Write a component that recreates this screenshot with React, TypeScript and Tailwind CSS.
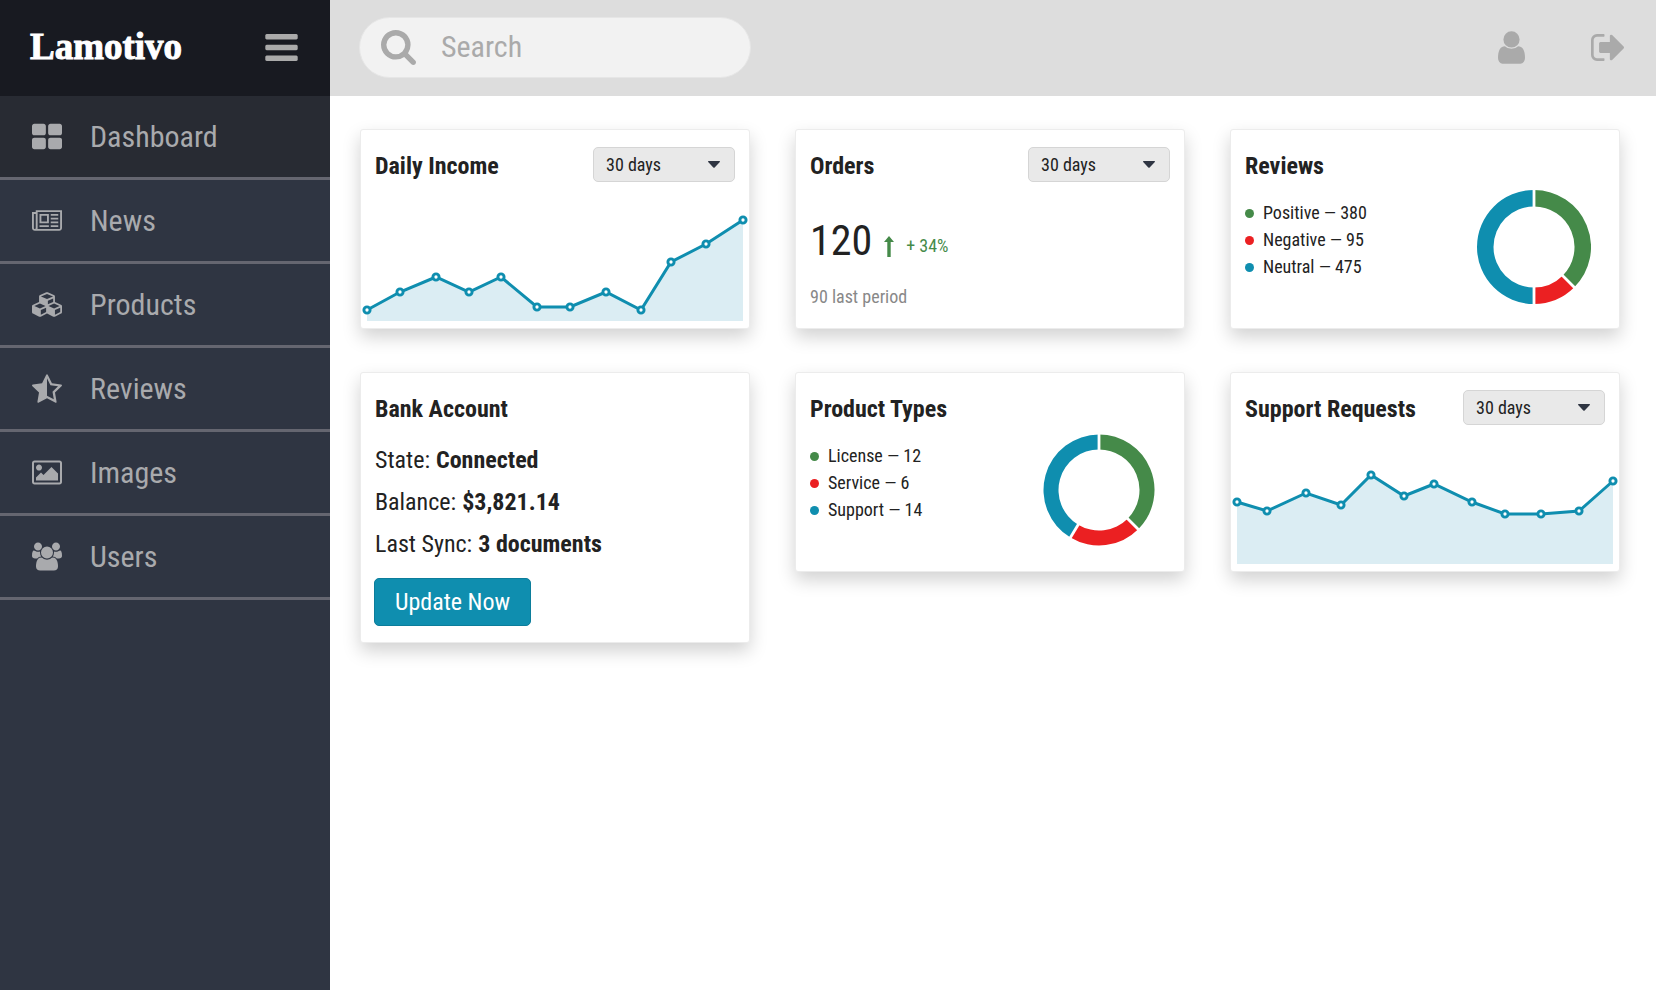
import { ReactNode, useState } from 'react'

interface IconProps {
  viewBox: string
  className: string
  d: string
}

const BARS = 'M1664 1344v128q0 26-19 45t-45 19h-1408q-26 0-45-19t-19-45v-128q0-26 19-45t45-19h1408q26 0 45 19t19 45zm0-512v128q0 26-19 45t-45 19h-1408q-26 0-45-19t-19-45v-128q0-26 19-45t45-19h1408q26 0 45 19t19 45zm0-512v128q0 26-19 45t-45 19h-1408q-26 0-45-19t-19-45v-128q0-26 19-45t45-19h1408q26 0 45 19t19 45z'
const SEARCH = 'M1216 832q0-185-131.5-316.5t-316.5-131.5-316.5 131.5-131.5 316.5 131.5 316.5 316.5 131.5 316.5-131.5 131.5-316.5zm512 832q0 52-38 90t-90 38q-54 0-90-38l-343-342q-179 124-399 124-143 0-273.5-55.5t-225-150-150-225-55.5-273.5 55.5-273.5 150-225 225-150 273.5-55.5 273.5 55.5 225 150 150 225 55.5 273.5q0 220-124 399l343 343q37 37 37 90z'
const USER = 'M1536 1399q0 109-62.5 187t-150.5 78h-854q-88 0-150.5-78t-62.5-187q0-85 8.5-160.5t31.5-152 58.5-131 94-89 134.5-34.5q131 128 313 128t313-128q76 0 134.5 34.5t94 89 58.5 131 31.5 152 8.5 160.5zm-256-887q0 159-112.5 271.5t-271.5 112.5-271.5-112.5-112.5-271.5 112.5-271.5 271.5-112.5 271.5 112.5 112.5 271.5z'
const SIGN_OUT = 'M704 1440q0 4 1 20t.5 26.5-3 23.5-10 19.5-20.5 6.5h-320q-119 0-203.5-84.5t-84.5-203.5v-704q0-119 84.5-203.5t203.5-84.5h320q13 0 22.5 9.5t9.5 22.5q0 4 1 20t.5 26.5-3 23.5-10 19.5-20.5 6.5h-320q-66 0-113 47t-47 113v704q0 66 47 113t113 47h312l11.5 1 11.5 3 8 5.5 7 9 2 13.5zm928-544q0 26-19 45l-544 544q-19 19-45 19t-45-19-19-45v-288h-448q-26 0-45-19t-19-45v-384q0-26 19-45t45-19h448v-288q0-26 19-45t45-19 45 19l544 544q19 19 19 45z'
const TILES = 'M832 1024v384q0 52-38 90t-90 38h-512q-52 0-90-38t-38-90v-384q0-52 38-90t90-38h512q52 0 90 38t38 90zm0-768v384q0 52-38 90t-90 38h-512q-52 0-90-38t-38-90v-384q0-52 38-90t90-38h512q52 0 90 38t38 90zm896 768v384q0 52-38 90t-90 38h-512q-52 0-90-38t-38-90v-384q0-52 38-90t90-38h512q52 0 90 38t38 90zm0-768v384q0 52-38 90t-90 38h-512q-52 0-90-38t-38-90v-384q0-52 38-90t90-38h512q52 0 90 38t38 90z'
const NEWS = 'M1024 512h-384v384h384v-384zm128 640v128h-640v-128h640zm0-768v640h-640v-640h640zm640 768v128h-512v-128h512zm0-256v128h-512v-128h512zm0-256v128h-512v-128h512zm0-256v128h-512v-128h512zm-1536 960v-960h-128v960q0 26 19 45t45 19 45-19 19-45zm1664 0v-1088h-1536v1088q0 33-11 64h1483q26 0 45-19t19-45zm128-1216v1216q0 80-56 136t-136 56h-1664q-80 0-136-56t-56-136v-1088h256v-128h1792z'
const CUBES = 'M640 1632l384-192v-314l-384 164v342zm-64-454l404-173-404-173-404 173zm1088 454l384-192v-314l-384 164v342zm-64-454l404-173-404-173-404 173zm-448-293l384-165v-266l-384 164v267zm-64-379l441-189-441-189-441 189zm1088 518v416q0 36-19 67t-52 47l-448 224q-25 14-57 14t-57-14l-448-224q-4-2-7-4-2 2-7 4l-448 224q-25 14-57 14t-57-14l-448-224q-33-16-52-47t-19-67v-416q0-38 21.5-70t56.5-48l434-186v-400q0-38 21.5-70t56.5-48l448-192q23-10 50-10t50 10l448 192q35 16 56.5 48t21.5 70v400l434 186q36 16 57 48t21 70z'
const HALF_STAR = 'M1728 647q0 22-26 48l-363 354 86 500q1 7 1 20 0 50-41 50-19 0-40-12l-449-236-449 236q-22 12-40 12-21 0-31.5-14.5t-10.5-35.5q0-6 2-20l86-500-364-354q-25-27-25-48 0-37 56-46l502-73 225-455q19-41 49-41t49 41l225 455 502 73q56 9 56 46zM896 263v963l377 199-72-421 306-297-422-62z'
const PICTURE = 'M640 576q0 80-56 136t-136 56-136-56-56-136 56-136 136-56 136 56 56 136zm1024 384v448h-1408v-192l320-320 160 160 512-512zm96-704h-1600q-13 0-22.5 9.5t-9.5 22.5v1216q0 13 9.5 22.5t22.5 9.5h1600q13 0 22.5-9.5t9.5-22.5v-1216q0-13-9.5-22.5t-22.5-9.5zm160 32v1216q0 66-47 113t-113 47h-1600q-66 0-113-47t-47-113v-1216q0-66 47-113t113-47h1600q66 0 113 47t47 113z'
const USERS = 'M593 896q-162 5-265 128h-134q-82 0-138-40.5t-56-118.5q0-353 124-353 6 0 43.5 21t97.5 42.5 119 21.5q67 0 133-23-5 37-5 66 0 139 81 256zm1071 637q0 120-73 189.5t-194 69.5h-874q-121 0-194-69.5t-73-189.5q0-53 3.5-103.5t14-109 26.5-108.5 43-97.5 62-81 85.5-53.5 111.5-20q10 0 43 21.5t73 48 107 48 135 21.5 135-21.5 107-48 73-48 43-21.5q61 0 111.5 20t85.5 53.5 62 81 43 97.5 26.5 108.5 14 109 3.5 103.5zm-1024-1277q0 106-75 181t-181 75-181-75-75-181 75-181 181-75 181 75 75 181zm704 384q0 159-112.5 271.5t-271.5 112.5-271.5-112.5-112.5-271.5 112.5-271.5 271.5-112.5 271.5 112.5 112.5 271.5zm576 225q0 78-56 118.5t-138 40.5h-134q-103-123-265-128 81-117 81-256 0-29-5-66 66 23 133 23 59 0 119-21.5t97.5-42.5 43.5-21q124 0 124 353zm-128-609q0 106-75 181t-181 75-181-75-75-181 75-181 181-75 181 75 75 181z'

const NAV = [
  { label: 'Dashboard', viewBox: '64 128 1664 1408', d: TILES },
  { label: 'News', viewBox: '0 128 2048 1408', d: NEWS },
  { label: 'Products', viewBox: '0 0 2176 1792', d: CUBES },
  { label: 'Reviews', viewBox: '64 32 1664 1587', d: HALF_STAR },
  { label: 'Images', viewBox: '0 128 1920 1536', d: PICTURE },
  { label: 'Users', viewBox: '0 0 1920 1792', d: USERS },
]

const INCOME = [[6, 110], [39, 92], [75, 77], [108, 92], [140, 77], [176, 107], [209, 107], [245, 92], [280, 110], [310, 62], [345, 44], [382, 20]]
const REQUESTS = [[6, 59], [36, 68], [75, 50], [110, 62], [140, 32], [173, 53], [203, 41], [241, 59], [274, 71], [310, 71], [348, 68], [382, 38]]

const GREEN = '#458a49'
const RED = '#eb2022'
const BLUE = '#0f8eaf'

function Icon({ viewBox, className, d }: IconProps) {
  return (
    <svg viewBox={viewBox} className={className} fill="currentColor" fillRule="evenodd" aria-hidden="true">
      <path d={d} />
    </svg>
  )
}

function PeriodSelect({ label }: { label: string }) {
  const [period, setPeriod] = useState('30')

  return (
    <div className="relative">
      <select
        aria-label={label}
        value={period}
        onChange={(e) => setPeriod(e.target.value)}
        className="block h-[35px] w-[142px] appearance-none rounded-[5px] border border-[#d5d5d5] bg-[#e9e9e9] pl-3 pr-8 text-[18px] leading-6"
      >
        <option value="7">7 days</option>
        <option value="30">30 days</option>
        <option value="90">90 days</option>
      </select>
      <svg viewBox="0 0 12 7" className="pointer-events-none absolute top-[14px] right-[15px] h-[7px] w-3" fill="#2f3542" aria-hidden="true">
        <path d="M.6 0h10.8q.9.2.4 1L6.7 6.5q-.7.6-1.4 0L.2 1Q-.3.2.6 0z" />
      </svg>
    </div>
  )
}

interface CardProps {
  title: string
  select?: boolean
  children: ReactNode
}

function Card({ title, select, children }: CardProps) {
  return (
    <section className="rounded-[3px] border border-[#ececec] bg-white shadow-[0_8px_18px_rgba(0,0,0,0.18)]">
      <div className="flex h-[70px] items-start justify-between px-[14px] pt-[17px]">
        <h2 className="text-[24px] leading-[38px] font-bold">{title}</h2>
        {select && <PeriodSelect label={`${title} period`} />}
      </div>
      {children}
    </section>
  )
}

function LineChart({ points }: { points: number[][] }) {
  const line = points.map((p) => p.join(',')).join(' ')

  return (
    <svg viewBox="0 0 388 128" className="block w-full">
      <polygon points={`6,121 ${line} 382,121`} fill="#dbedf3" />
      <polyline points={line} fill="none" stroke={BLUE} strokeWidth="3" />
      {points.map(([x, y]) => (
        <circle key={x} cx={x} cy={y} r="3.1" fill="#fff" stroke={BLUE} strokeWidth="2.9" />
      ))}
    </svg>
  )
}

interface DonutProps {
  stops: number[]
  outer: number
}

// stops are the angles, in degrees clockwise from the top, where each slice ends
function Donut({ stops, outer }: DonutProps) {
  const inner = 40.5
  const at = (deg: number, r: number) => {
    const a = (deg * Math.PI) / 180
    return `${57 + r * Math.sin(a)} ${57 - r * Math.cos(a)}`
  }

  return (
    <svg viewBox="0 0 114 114" className="h-[114px] w-[114px] shrink-0">
      {stops.map((end, i) => {
        const start = i === 0 ? 0 : stops[i - 1]
        const large = end - start > 180 ? 1 : 0
        return (
          <path
            key={end}
            fill={[GREEN, RED, BLUE][i]}
            d={`M${at(start, outer)}A${outer} ${outer} 0 ${large} 1 ${at(end, outer)}L${at(end, inner)}A${inner} ${inner} 0 ${large} 0 ${at(start, inner)}z`}
          />
        )
      })}
      {stops.map((end) => (
        <path key={end} d={`M${at(end, inner - 2)}L${at(end, outer + 2)}`} stroke="#fff" strokeWidth="2.8" />
      ))}
    </svg>
  )
}

function Breakdown({ items, stops, outer }: DonutProps & { items: string[] }) {
  const dots = ['bg-[#458a49]', 'bg-[#eb2022]', 'bg-[#0f8eaf]']

  return (
    <div className="flex h-32 justify-between pr-7 pl-[14px]">
      <ul className="-mt-px text-[18px] leading-[27px]">
        {items.map((item, i) => (
          <li key={item} className="flex items-center gap-[9px]">
            <span className={`mt-[2px] h-[9px] w-[9px] rounded-full ${dots[i]}`} />
            {item}
          </li>
        ))}
      </ul>
      <div className="-mt-[10px]">
        <Donut stops={stops} outer={outer} />
      </div>
    </div>
  )
}

export default function App() {
  const [query, setQuery] = useState('')

  return (
    <div className="flex min-h-screen bg-white font-['Roboto_Condensed','Liberation_Sans_Narrow',Roboto,sans-serif] text-[#222]">

      {/* Sidebar */}
      <aside className="w-[330px] shrink-0 bg-[#2f3542] text-[#a9aaad]">
        <div className="flex h-24 items-center justify-between bg-[#181a21] pr-8 pb-[2px] pl-[30px]">
          <span className="font-['Liberation_Serif',serif] text-[37px] leading-10 font-bold text-white [-webkit-text-stroke:1px_white]">Lamotivo</span>
          <button type="button" aria-label="Toggle menu">
            <Icon viewBox="128 256 1536 1280" className="h-[27px] w-[33px] text-[#aaa]" d={BARS} />
          </button>
        </div>
        <nav>
          {NAV.map((item, i) => (
            <a
              key={item.label}
              href="#"
              className={`flex h-[84px] items-center gap-7 border-b-[3px] border-[#656670] pl-8 text-[30px] leading-9 ${i === 0 ? 'bg-[#282b33]' : ''}`}
            >
              <Icon viewBox={item.viewBox} className="h-[29px] w-[30px]" d={item.d} />
              {item.label}
            </a>
          ))}
        </nav>
      </aside>

      <div className="min-w-0 flex-1">

        {/* Top bar */}
        <header className="flex h-24 items-center justify-between bg-[#ddd] pr-8 pb-[2px] pl-[29px] text-[#aaa]">
          <label className="flex h-[61px] w-[392px] items-center gap-[25px] rounded-full border border-[#e6e6e6] bg-[#f2f2f2] pl-[21px]">
            <Icon viewBox="64 128 1664 1664" className="h-[35px] w-[35px] shrink-0" d={SEARCH} />
            <input
              type="text"
              aria-label="Search"
              placeholder="Search"
              value={query}
              onChange={(e) => setQuery(e.target.value)}
              className="min-w-0 flex-1 bg-transparent text-[30px] leading-9 outline-none placeholder:text-[#aaa]"
            />
          </label>
          <div className="flex items-center gap-[66px]">
            <button type="button" aria-label="Account">
              <Icon viewBox="256 128 1280 1536" className="h-[33px] w-[27px]" d={USER} />
            </button>
            <button type="button" aria-label="Sign out">
              <Icon viewBox="64 256 1568 1280" className="h-[27px] w-[33px]" d={SIGN_OUT} />
            </button>
          </div>
        </header>

        {/* Cards */}
        <main className="grid grid-cols-3 items-start gap-x-[45px] gap-y-[43px] pt-[33px] pr-9 pb-10 pl-[30px]">
          <Card title="Daily Income" select>
            <LineChart points={INCOME} />
          </Card>

          <Card title="Orders" select>
            <div className="h-32 px-[14px] pt-[17px]">
              <div className="flex items-center gap-3">
                <span className="text-[42px] leading-[48px]">120</span>
                <svg viewBox="0 0 10 21" className="mt-[10px] h-[21px] w-[10px]" fill={GREEN} aria-hidden="true">
                  <path d="M5 0l5 6H6.7v15H3.3V6H0z" />
                </svg>
                <span className="mt-[10px] text-[18px] leading-6 text-[#458a49]">+ 34%</span>
              </div>
              <p className="mt-5 text-[18px] leading-6 text-[#888]">90 last period</p>
            </div>
          </Card>

          <Card title="Reviews">
            <Breakdown items={['Positive — 380', 'Negative — 95', 'Neutral — 475']} stops={[135, 180, 360]} outer={57} />
          </Card>

          <Card title="Bank Account">
            <div className="-mt-1 px-[13px] pb-4">
              <dl className="px-px text-[24px] leading-[42px]">
                <div className="flex gap-[6px]">
                  <dt>State:</dt>
                  <dd className="font-bold">Connected</dd>
                </div>
                <div className="flex gap-[6px]">
                  <dt>Balance:</dt>
                  <dd className="font-bold">$3,821.14</dd>
                </div>
                <div className="flex gap-[6px]">
                  <dt>Last Sync:</dt>
                  <dd className="font-bold">3 documents</dd>
                </div>
              </dl>
              <button type="button" className="mt-[13px] h-12 rounded-[5px] border border-[#0c7d9b] bg-[#0f8eaf] px-5 text-[24px] leading-9 text-white">
                Update Now
              </button>
            </div>
          </Card>

          <Card title="Product Types">
            <Breakdown items={['License — 12', 'Service — 6', 'Support — 14']} stops={[135, 211, 360]} outer={55.5} />
          </Card>

          <Card title="Support Requests" select>
            <LineChart points={REQUESTS} />
          </Card>
        </main>
      </div>
    </div>
  )
}
